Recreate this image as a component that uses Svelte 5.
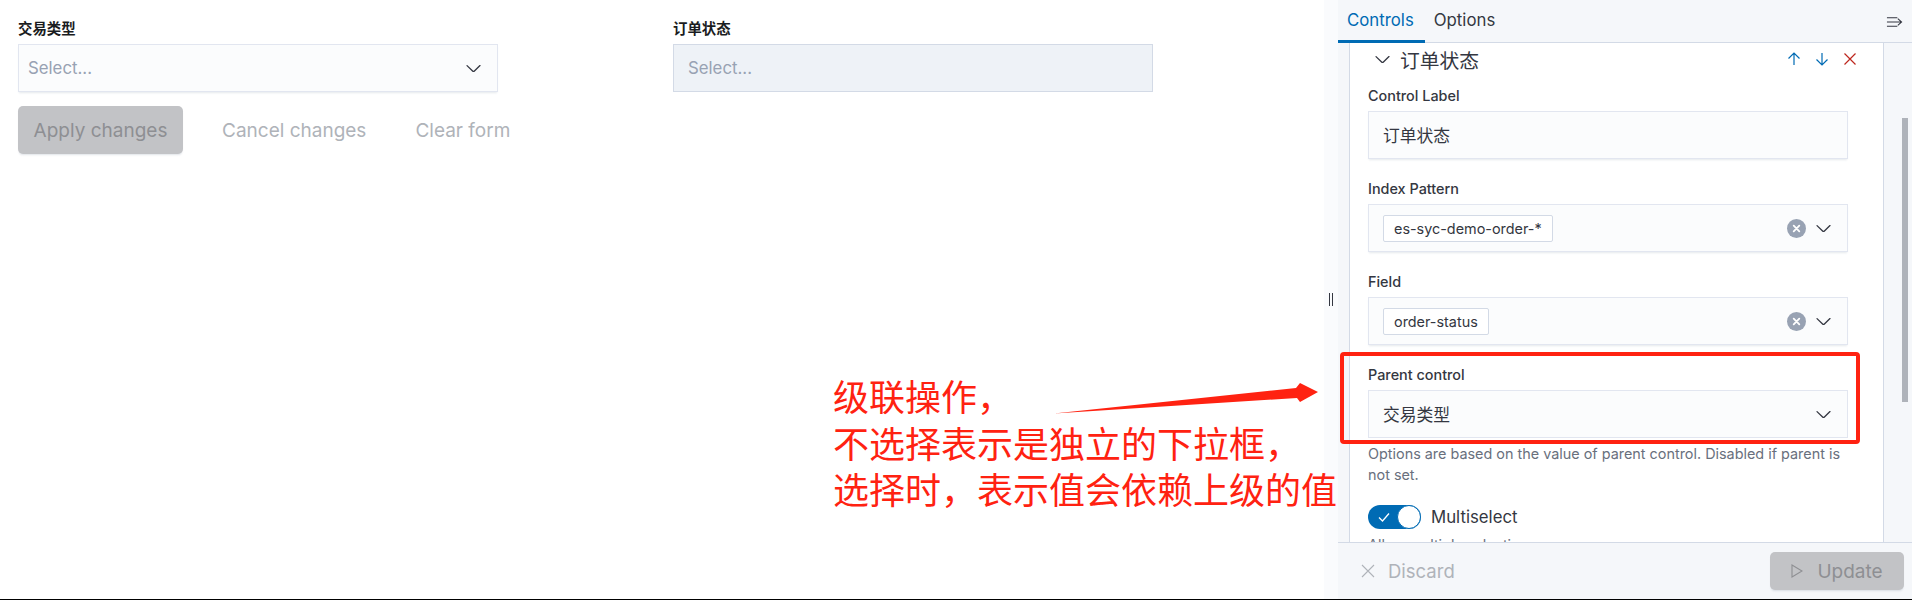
<script>
    const filters = [
        { label: '交易类型', disabled: false },
        { label: '订单状态', disabled: true },
    ];
</script>

{#snippet chevron()}
    <svg class="chevron" viewBox="0 0 16 16" aria-hidden="true">
        <path d="M13.069 5.157 8.384 9.768a.546.546 0 0 1-.768 0L2.93 5.158a.552.552 0 0 0-.771 0 .53.53 0 0 0 0 .759l4.684 4.61c.641.631 1.672.63 2.312 0l4.684-4.61a.53.53 0 0 0 0-.76.552.552 0 0 0-.771 0Z" />
    </svg>
{/snippet}

{#snippet clear_icon()}
    <svg class="clear" viewBox="0 0 19 19" aria-hidden="true">
        <circle cx="9.5" cy="9.5" r="9.5" fill="#98a2b3" />
        <path d="M6.7 6.7l5.6 5.6M12.3 6.7l-5.6 5.6" stroke="#fff" stroke-width="1.8" stroke-linecap="round" />
    </svg>
{/snippet}

<div class="page">
    <main class="canvas">
        <div class="filters">
            {#each filters as f}
                <div class="filter">
                    <div class="filter-label">{f.label}</div>
                    <div class="select" class:disabled={f.disabled}>
                        <span class="placeholder">Select...</span>
                        {#if !f.disabled}
                            {@render chevron()}
                        {/if}
                    </div>
                </div>
            {/each}
        </div>
        <div class="actions">
            <button class="apply">Apply changes</button>
            <span class="link cancel">Cancel changes</span>
            <span class="link">Clear form</span>
        </div>
    </main>

    <div class="gutter"><span class="handle"></span></div>

    <aside class="panel">
        <div class="tabs">
            <div class="tab active">Controls</div>
            <div class="tab">Options</div>
            <svg class="collapse" viewBox="0 0 18 12" aria-hidden="true">
                <path d="M1 1.5h11M1 6h15M1 10.5h11M12.5 2.5 16.5 6l-4 3.5" fill="none" stroke="#343741" stroke-width="1.1" />
            </svg>
        </div>

        <div class="body">
            <div class="card">
                <div class="card-head">
                    {@render chevron()}
                    <span class="card-title">订单状态</span>
                    <div class="card-tools">
                        <svg viewBox="0 0 14 14" aria-hidden="true"><path d="M7 13V1.2M1.5 6.5 7 1l5.500 5.500" fill="none" stroke="#006bb4" stroke-width="1.2" /></svg>
                        <svg viewBox="0 0 14 14" aria-hidden="true"><path d="M7 1v11.800M1.500 7.500 7 13l5.500-5.500" fill="none" stroke="#006bb4" stroke-width="1.2" /></svg>
                        <svg viewBox="0 0 14 14" aria-hidden="true"><path d="M1.500 1.500l11 11M12.500 1.500l-11 11" fill="none" stroke="#bd271e" stroke-width="1.2" /></svg>
                    </div>
                </div>

                <div class="row">
                    <div class="row-label">Control Label</div>
                    <div class="field">订单状态</div>
                </div>
                <div class="row">
                    <div class="row-label">Index Pattern</div>
                    <div class="field">
                        <span class="pill">es-syc-demo-order-*</span>
                        {@render clear_icon()}
                        {@render chevron()}
                    </div>
                </div>
                <div class="row">
                    <div class="row-label">Field</div>
                    <div class="field">
                        <span class="pill">order-status</span>
                        {@render clear_icon()}
                        {@render chevron()}
                    </div>
                </div>
                <div class="row">
                    <div class="row-label">Parent control</div>
                    <div class="field flat">
                        <span class="grow">交易类型</span>
                        {@render chevron()}
                    </div>
                    <div class="help">Options are based on the value of parent control. Disabled if parent is not set.</div>
                </div>

                <div class="switch-row">
                    <span class="switch">
                        <svg viewBox="0 0 16 16" aria-hidden="true"><path d="M3 8.500 6.500 12 13 4.500" fill="none" stroke="#fff" stroke-width="1.300" /></svg>
                        <span class="knob"></span>
                    </span>
                    <span class="switch-label">Multiselect</span>
                </div>
                <div class="help tight">Allow multiple selection</div>
            </div>
            <div class="scrollbar"></div>
        </div>

        <div class="footer">
            <span class="discard">
                <svg viewBox="0 0 14 14" aria-hidden="true"><path d="M1 1l12 12M13 1 1 13" fill="none" stroke="#afb3b9" stroke-width="1.100" /></svg>
                Discard
            </span>
            <button class="update">
                <svg viewBox="0 0 12 14" aria-hidden="true"><path d="M1 1l10 6-10 6z" fill="none" stroke="#8e8f93" stroke-width="1.100" /></svg>
                Update
            </button>
        </div>
    </aside>

    <!-- annotation drawn over the screenshot -->
    <div class="note">级联操作，<br />不选择表示是独立的下拉框，<br />选择时，表示值会依赖上级的值</div>
    <svg class="arrow" viewBox="0 0 1912 600" aria-hidden="true">
        <path d="M1054 413.500 1296 388 1300 383 1318 392 1300 402 1297 398Z" fill="#ff2211" />
    </svg>
    <div class="redbox"></div>
</div>

<style>
    :global(body) {
        margin: 0;
        background: #fff;
    }

    .page {
        position: relative;
        display: flex;
        height: 600px;
        box-sizing: border-box;
        border-bottom: 1px solid #000;
        overflow: hidden;
        font-family: Inter, 'Noto Sans CJK SC', sans-serif;
        font-size: 16.8px;
        color: #343741;
    }

    .canvas {
        width: 1324px;
        flex: none;
        padding: 19px 0 0 18px;
        box-sizing: border-box;
    }

    .filters {
        display: flex;
    }

    .filter {
        width: 655px;
        flex: none;
    }

    .filter-label {
        font-size: 14.4px;
        font-weight: 600;
        line-height: 20px;
        margin-bottom: 5px;
        color: #1a1c21;
    }

    .select {
        width: 480px;
        height: 48px;
        box-sizing: border-box;
        display: flex;
        align-items: center;
        justify-content: space-between;
        padding: 0 14px 0 9px;
        background: #fbfcfd;
        border: 1px solid #e2e6f0;
        box-shadow: 0 2px 2px -1px rgba(152, 162, 179, 0.25);
    }

    .select.disabled {
        background: #eef2f7;
        border-color: #d3dae6;
        box-shadow: none;
        padding-left: 14px;
    }

    .placeholder {
        color: #98a2b3;
    }

    .chevron {
        width: 19px;
        height: 19px;
        flex: none;
        fill: #343741;
    }

    .actions {
        display: flex;
        align-items: center;
        margin-top: 14px;
        font-size: 19px;
        color: #afb3b9;
    }

    .apply,
    .update {
        font: inherit;
        color: #8e8f93;
        background: #c2c3c6;
        border: 0;
        border-radius: 5px;
        box-shadow: 0 2px 2px -1px rgba(152, 162, 179, 0.3);
        padding: 0;
    }

    .apply {
        width: 165px;
        height: 48px;
        margin-right: 39px;
    }

    .cancel {
        margin-right: 49px;
    }

    .gutter {
        width: 14px;
        flex: none;
        background: #fafbfd;
        display: flex;
        align-items: center;
        justify-content: center;
    }

    .handle {
        width: 2px;
        height: 13px;
        border-left: 1px solid #343741;
        border-right: 1px solid #343741;
    }

    .panel {
        flex: 1;
        min-width: 0;
        display: flex;
        flex-direction: column;
        background: #f5f7fa;
    }

    .tabs {
        height: 43px;
        flex: none;
        box-sizing: border-box;
        display: flex;
        border-bottom: 1px solid #d3dae6;
        padding-right: 9px;
    }

    .tab {
        height: 43px;
        box-sizing: border-box;
        padding: 0 11px 0 9px;
        line-height: 40px;
    }

    .tab.active {
        color: #006bb4;
        border-bottom: 3px solid #006bb4;
    }

    .collapse {
        width: 17px;
        height: 12px;
        margin: 16px 0 0 auto;
    }

    .body {
        flex: 1;
        min-height: 0;
        display: flex;
        overflow: hidden;
        padding-left: 11px;
    }

    .card {
        width: 535px;
        flex: none;
        box-sizing: border-box;
        background: #fff;
        border: solid #d3dae6;
        border-width: 0 1px;
        padding: 0 0 0 18px;
    }

    .card-head {
        height: 32px;
        margin-bottom: 11px;
        display: flex;
        align-items: center;
        padding: 0 26px 0 5px;
    }

    .card-title {
        font-size: 19.8px;
        margin-left: 8px;
    }

    .card-tools {
        display: flex;
        gap: 14px;
        margin-left: auto;
    }

    .card-tools svg {
        width: 14px;
        height: 14px;
    }

    .row {
        width: 480px;
        margin-bottom: 20px;
    }

    .row-label {
        font-size: 14.4px;
        font-weight: 500;
        line-height: 20px;
        margin-bottom: 5px;
    }

    .field {
        height: 48px;
        box-sizing: border-box;
        display: flex;
        align-items: center;
        padding: 0 14px 0 14px;
        background: #fbfcfd;
        border: 1px solid #e2e6f0;
        box-shadow: 0 2px 2px -1px rgba(152, 162, 179, 0.25);
    }

    .field.flat {
        box-shadow: none;
    }

    .grow {
        flex: 1;
    }

    .pill {
        height: 27px;
        box-sizing: border-box;
        border: 1px solid #d3dae6;
        border-radius: 2px;
        background: #fff;
        padding: 0 10px;
        font-size: 14.4px;
        line-height: 25px;
        margin-right: auto;
    }

    .clear {
        width: 19px;
        height: 19px;
        margin-right: 8px;
    }

    .help {
        font-size: 14.4px;
        line-height: 21px;
        color: #69707d;
        margin-top: 5px;
    }

    .help.tight {
        width: 480px;
    }

    .switch-row {
        display: flex;
        align-items: center;
        height: 24px;
        gap: 10px;
    }

    .switch {
        width: 53px;
        height: 24px;
        border-radius: 12px;
        background: #006bb4;
        display: flex;
        align-items: center;
        justify-content: space-between;
        padding-left: 8px;
        box-sizing: border-box;
    }

    .switch svg {
        width: 16px;
        height: 16px;
    }

    .knob {
        width: 24px;
        height: 24px;
        box-sizing: border-box;
        border-radius: 50%;
        background: #fff;
        border: 1px solid #006bb4;
    }

    .scrollbar {
        width: 6px;
        height: 284px;
        margin: 75px 0 0 18px;
        background: #afb3ba;
    }

    .footer {
        height: 57px;
        flex: none;
        box-sizing: border-box;
        border-top: 1px solid #d3dae6;
        background: #f5f7fa;
        display: flex;
        align-items: center;
        justify-content: space-between;
        padding: 0 8px 0 23px;
        font-size: 18.5px;
        color: #afb3b9;
    }

    .discard {
        display: flex;
        align-items: center;
        gap: 13px;
    }

    .discard svg {
        width: 14px;
        height: 14px;
    }

    .update {
        width: 134px;
        height: 38px;
        display: flex;
        align-items: center;
        justify-content: center;
        gap: 14px;
        font-size: 19px;
    }

    .update svg {
        width: 12px;
        height: 14px;
    }

    .note {
        position: absolute;
        left: 833px;
        top: 372px;
        font-family: 'Noto Sans CJK SC', sans-serif;
        font-size: 36px;
        line-height: 46.500px;
        color: #ff2211;
        white-space: nowrap;
    }

    .arrow {
        position: absolute;
        left: 0;
        top: 0;
        width: 1912px;
        height: 600px;
        pointer-events: none;
    }

    .redbox {
        position: absolute;
        left: 1340px;
        top: 352px;
        width: 520px;
        height: 92px;
        box-sizing: border-box;
        border: 4px solid #ff2211;
        border-radius: 4px;
    }
</style>
